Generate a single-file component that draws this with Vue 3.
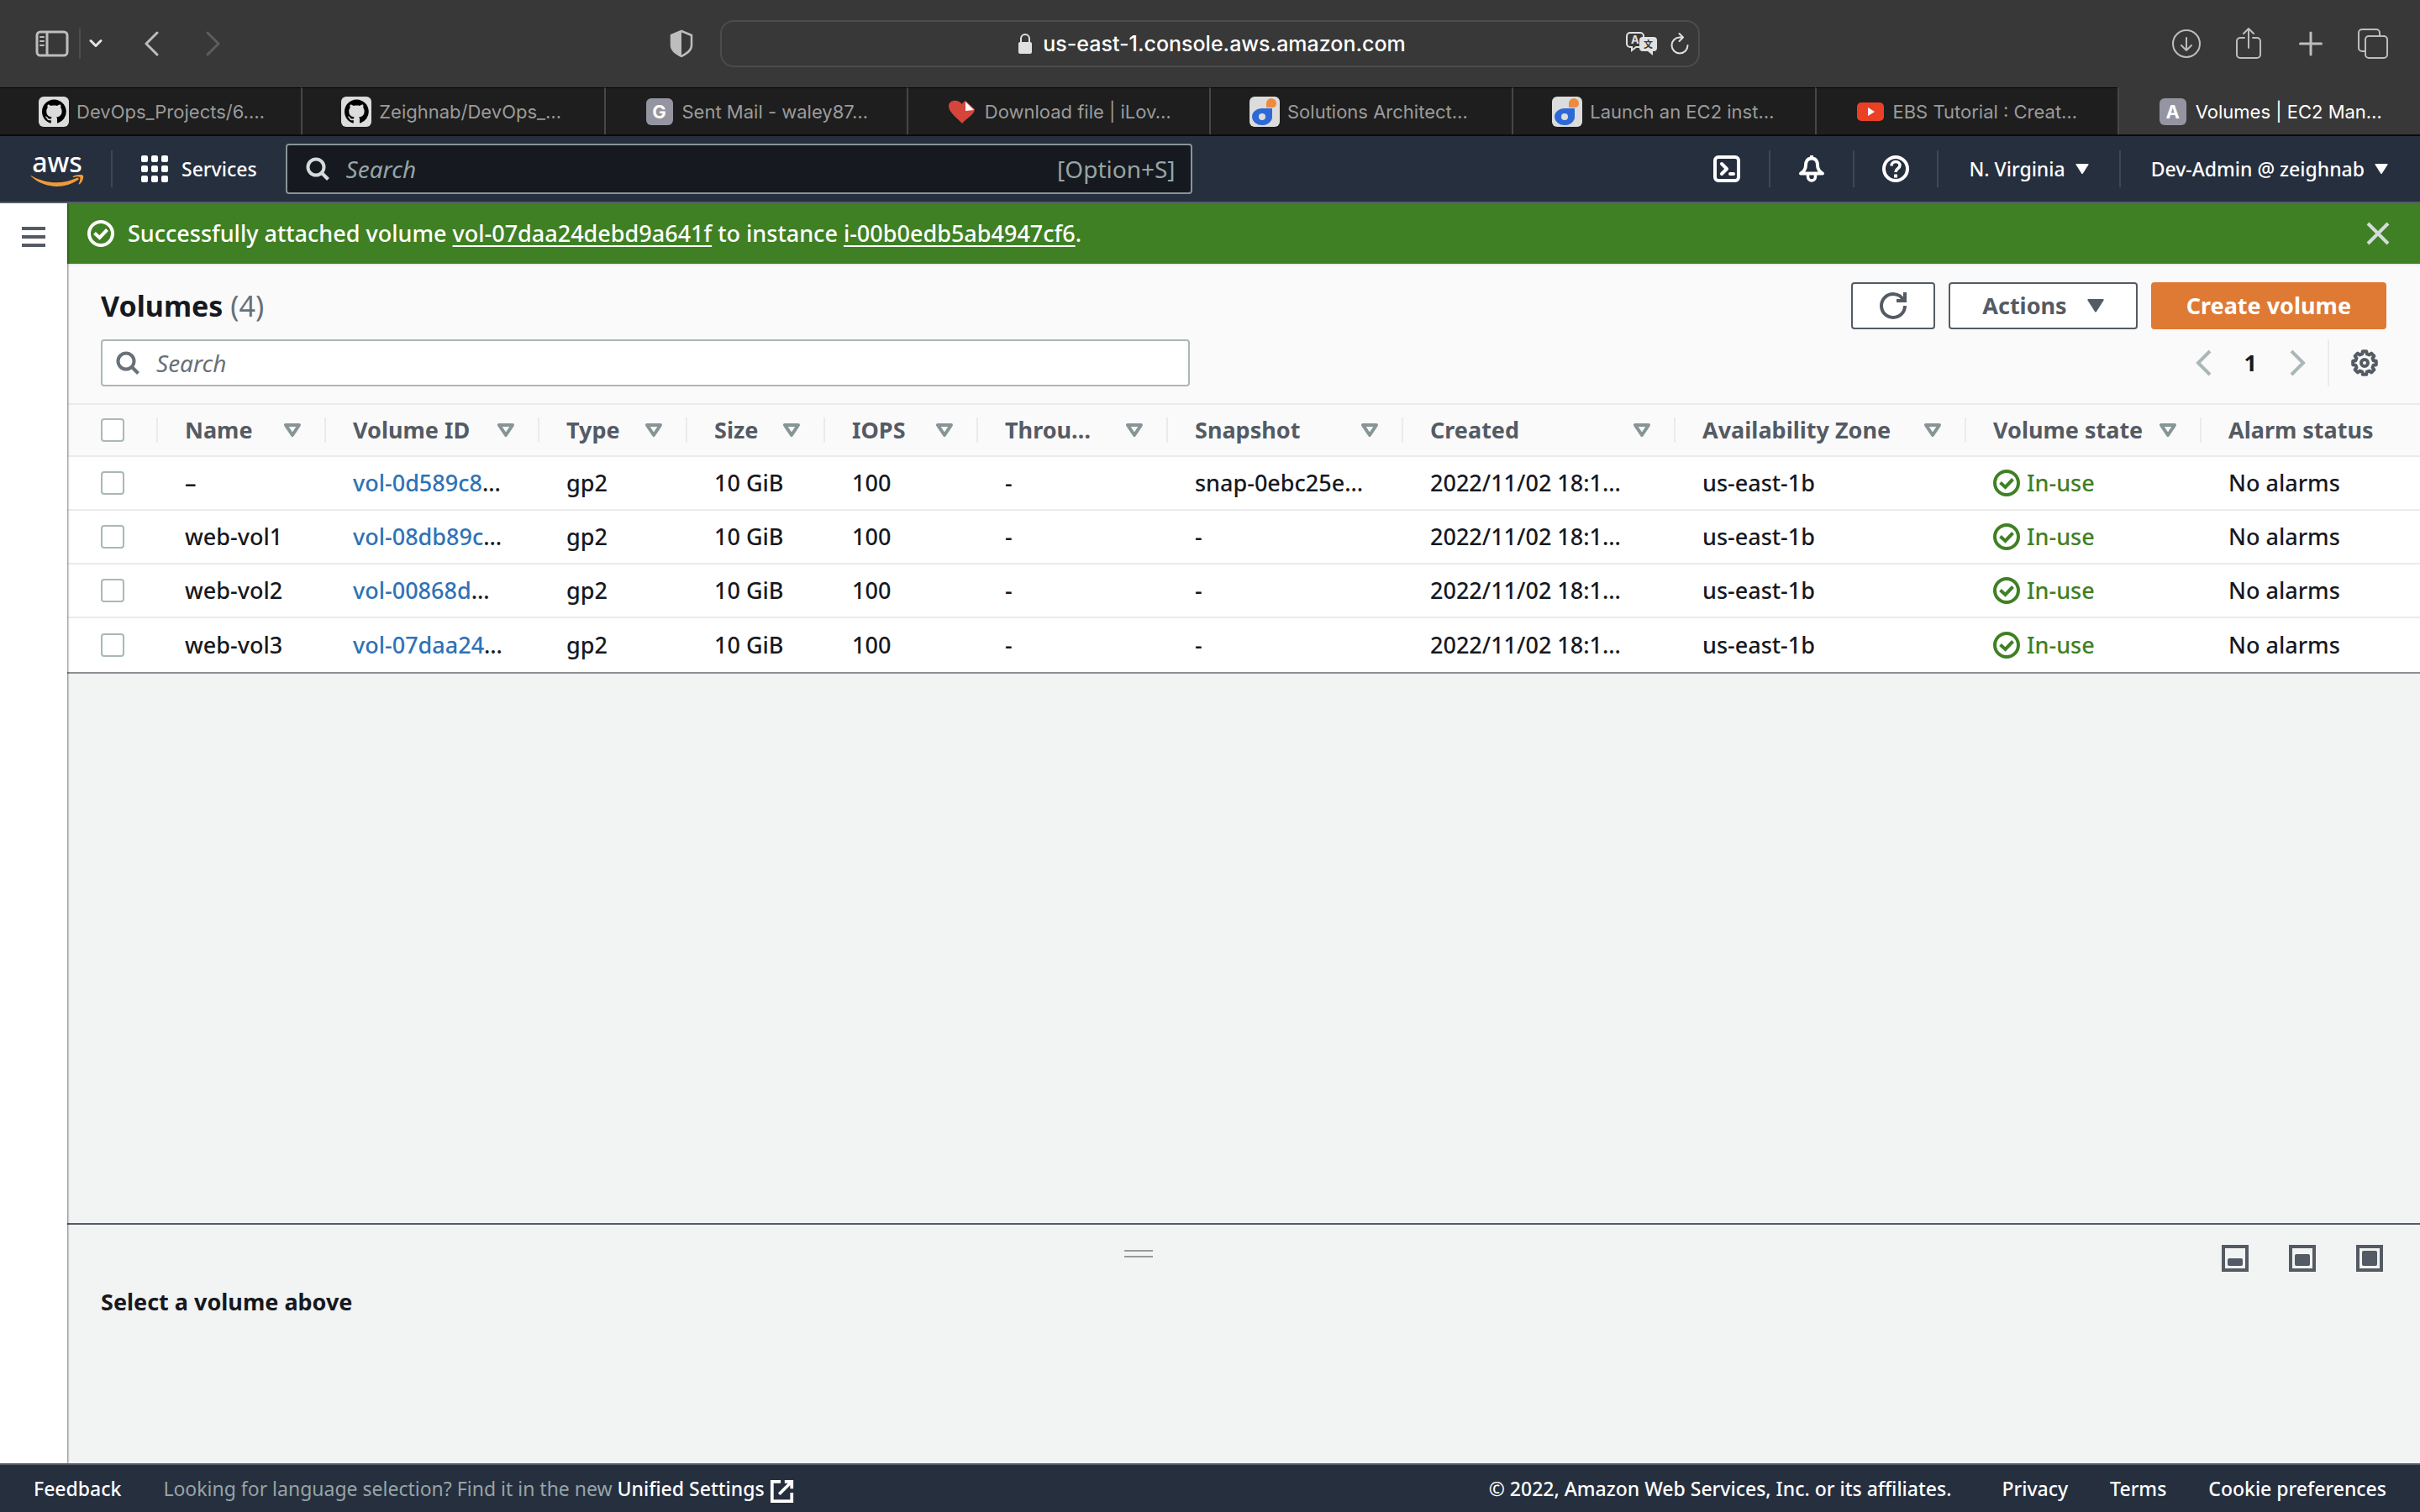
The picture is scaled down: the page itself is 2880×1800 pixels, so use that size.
<script setup>
import { ref } from 'vue'

const github = 'M8 0C3.58 0 0 3.58 0 8c0 3.54 2.29 6.53 5.47 7.59.4.07.55-.17.55-.38 0-.19-.01-.82-.01-1.49-2.01.37-2.53-.49-2.69-.94-.09-.23-.48-.94-.82-1.13-.28-.15-.68-.52-.01-.53.63-.01 1.08.58 1.23.82.72 1.21 1.87.87 2.33.66.07-.52.28-.87.51-1.07-1.78-.2-3.64-.89-3.64-3.95 0-.87.31-1.59.82-2.15-.08-.2-.36-1.02.08-2.12 0 0 .67-.21 2.2.82.64-.18 1.32-.27 2-.27.68 0 1.36.09 2 .27 1.53-1.04 2.2-.82 2.2-.82.44 1.1.16 1.92.08 2.12.51.56.82 1.27.82 2.15 0 3.07-1.87 3.75-3.65 3.95.29.25.54.73.54 1.48 0 1.07-.01 1.93-.01 2.2 0 .21.15.46.55.38A8.013 8.013 0 0016 8c0-4.42-3.58-8-8-8z'

const tabs = [
  { icon: 'github', title: 'DevOps_Projects/6.…' },
  { icon: 'github', title: 'Zeighnab/DevOps_…' },
  { icon: 'letter', letter: 'G', title: 'Sent Mail - waley87…' },
  { icon: 'heart', title: 'Download file | iLov…' },
  { icon: 'digital', title: 'Solutions Architect…' },
  { icon: 'digital', title: 'Launch an EC2 inst…' },
  { icon: 'youtube', title: 'EBS Tutorial : Creat…' },
  { icon: 'letter', letter: 'A', title: 'Volumes | EC2 Man…', active: true }
]

const columns = [
  { label: 'Name', cls: 'c-name' },
  { label: 'Volume ID', cls: 'c-id' },
  { label: 'Type', cls: 'c-type' },
  { label: 'Size', cls: 'c-size' },
  { label: 'IOPS', cls: 'c-iops' },
  { label: 'Throu…', cls: 'c-through' },
  { label: 'Snapshot', cls: 'c-snap' },
  { label: 'Created', cls: 'c-created' },
  { label: 'Availability Zone', cls: 'c-zone' },
  { label: 'Volume state', cls: 'c-state' },
  { label: 'Alarm status', cls: 'c-alarm', last: true }
]

const volumes = ref([
  { name: '–', id: 'vol-0d589c8', snapshot: 'snap-0ebc25e…', selected: false },
  { name: 'web-vol1', id: 'vol-08db89c', snapshot: '-', selected: false },
  { name: 'web-vol2', id: 'vol-00868d', snapshot: '-', selected: false },
  { name: 'web-vol3', id: 'vol-07daa24', snapshot: '-', selected: false }
])

// Cog outline: eight flat teeth around the centre of a 32-unit box
const cog = (() => {
  const pts = []
  for (let i = 0; i < 8; i++) {
    const base = (i * Math.PI) / 4
    for (const [off, r] of [[-0.26, 11], [-0.16, 14], [0.16, 14], [0.26, 11]]) {
      pts.push(`${(16 + r * Math.sin(base + off)).toFixed(1)},${(16 - r * Math.cos(base + off)).toFixed(1)}`)
    }
  }
  return pts.join(' ')
})()

const panelSizes = [
  { label: 'Small panel', y: 16, h: 9 },
  { label: 'Medium panel', y: 11, h: 14 },
  { label: 'Large panel', y: 7, h: 18 }
]
</script>

<template>
  <div class="page">
    <div class="toolbar">
      <div class="tool-side">
        <button class="tool" aria-label="Sidebar">
          <svg width="40" height="32" viewBox="0 0 40 32" fill="none" stroke="#bdbdbd" stroke-width="3">
            <rect x="2" y="2" width="36" height="28" rx="4" />
            <path d="M14 2v28" />
            <path d="M6 8h4M6 13h4M6 18h4" stroke-width="2" stroke-linecap="round" />
          </svg>
        </button>
        <span class="tool-rule"></span>
        <button class="tool drop" aria-label="Tab groups">
          <svg width="16" height="12" viewBox="0 0 16 12" fill="none" stroke="#e4e4e4" stroke-width="3" stroke-linecap="round" stroke-linejoin="round"><path d="M2 2.500l6 6 6-6" /></svg>
        </button>
        <button class="tool back" aria-label="Back">
          <svg width="18" height="30" viewBox="0 0 18 30" fill="none" stroke="#bdbdbd" stroke-width="3" stroke-linecap="round" stroke-linejoin="round"><path d="M15 2L2 15l13 13" /></svg>
        </button>
        <button class="tool forward" aria-label="Forward">
          <svg width="18" height="30" viewBox="0 0 18 30" fill="none" stroke="#5d5d5d" stroke-width="3" stroke-linecap="round" stroke-linejoin="round"><path d="M3 2l13 13L3 28" /></svg>
        </button>
        <button class="tool shield" aria-label="Privacy report">
          <svg width="28" height="34" viewBox="0 0 28 34"><path d="M14 2l12 5v12c0 6-5 9-12 13C7 28 2 25 2 19V7z" fill="none" stroke="#bdbdbd" stroke-width="2.500" stroke-linejoin="round" /><path d="M14 2v30C7 28 2 25 2 19V7z" fill="#bdbdbd" /></svg>
        </button>
      </div>
      <div class="address">
        <div class="address-text">
          <svg width="18" height="24" viewBox="0 0 18 24"><rect x="1" y="10" width="16" height="14" rx="2" fill="#e0e0e0" /><path d="M4 11V6a5 5 0 0110 0v5" fill="none" stroke="#e0e0e0" stroke-width="2" /></svg>
          <input class="url" type="text" aria-label="Address" value="us-east-1.console.aws.amazon.com" />
        </div>
        <button class="tool" aria-label="Translate">
          <svg width="38" height="28" viewBox="0 0 38 28">
            <path d="M16 18h-4l-5 4v-4H5a4 4 0 01-4-4V5a4 4 0 014-4h12a4 4 0 014 4v2" fill="none" stroke="#e0e0e0" stroke-width="2" />
            <text x="6" y="14" font-size="13" fill="#e0e0e0" class="mark">A</text>
            <path d="M20 6h13a4 4 0 014 4v9a4 4 0 01-4 4h-1v5l-6-5h-6a4 4 0 01-4-4v-9a4 4 0 014-4z" fill="#e0e0e0" />
            <text x="21" y="19" font-size="11" fill="#383838" class="mark">文</text>
          </svg>
        </button>
        <button class="tool reload" aria-label="Reload">
          <svg width="24" height="28" viewBox="0 0 24 28" fill="none" stroke="#e0e0e0" stroke-width="2" stroke-linecap="round" stroke-linejoin="round"><path d="M21.500 16A9.500 9.500 0 1112 6.500h4M11.500 2l4.500 4.500-4.500 4.500" /></svg>
        </button>
      </div>
      <div class="tool-right">
        <button class="tool" aria-label="Downloads">
          <svg width="36" height="38" viewBox="0 0 36 38" fill="none" stroke="#bdbdbd" stroke-width="2" stroke-linecap="round" stroke-linejoin="round"><circle cx="18" cy="19" r="16" /><path d="M18 12v15M12 21l6 6 6-6" /></svg>
        </button>
        <button class="tool" aria-label="Share">
          <svg width="32" height="38" viewBox="0 0 32 38" fill="none" stroke="#bdbdbd" stroke-width="2" stroke-linecap="round" stroke-linejoin="round"><path d="M11 12H6a4 4 0 00-4 4v16a4 4 0 004 4h20a4 4 0 004-4V16a4 4 0 00-4-4h-5M16 24V1M10 7l6-6 6 6" /></svg>
        </button>
        <button class="tool" aria-label="New tab">
          <svg width="28" height="38" viewBox="0 0 28 38" fill="none" stroke="#bdbdbd" stroke-width="3" stroke-linecap="round"><path d="M14 6v26M1.500 19h25" /></svg>
        </button>
        <button class="tool" aria-label="Tab overview">
          <svg width="36" height="38" viewBox="0 0 36 38" fill="none" stroke="#bdbdbd" stroke-width="2"><path d="M9 28H5a4 4 0 01-4-4V6a4 4 0 014-4h17a4 4 0 014 4v3" /><rect x="9" y="10" width="26" height="26" rx="4" /></svg>
        </button>
      </div>
    </div>

    <nav class="tabs">
      <a v-for="t in tabs" :key="t.title" href="#" class="tab" :class="{ active: t.active }">
        <span class="fav">
          <svg v-if="t.icon === 'github'" width="36" height="36" viewBox="0 0 36 36"><rect width="36" height="36" rx="6" fill="#dcdcdc" /><g transform="translate(4 3.500) scale(1.8)"><path :d="github" /></g></svg>
          <span v-else-if="t.icon === 'letter'" class="fav-letter">{{ t.letter }}</span>
          <svg v-else-if="t.icon === 'heart'" width="32" height="32" viewBox="0 0 32 32"><path d="M16 30C10 23 0 17 0 9c0-7 11-9 16-2 1-3 4-4 4-4l11 10c0 6-9 10-15 17z" fill="#d6453b" /><path d="M20 4l10 10-10 1z" fill="#fff" /></svg>
          <svg v-else-if="t.icon === 'digital'" width="36" height="36" viewBox="0 0 36 36"><rect width="36" height="36" rx="6" fill="#dcdcdc" /><path d="M20 13V8a6 6 0 0112 0c0 3-2 5-5 5z" fill="#ee8a3f" /><path d="M15 14h12v9a12 10 0 11-12-9z" fill="#2d69d6" /><circle cx="15" cy="24" r="4" fill="#dcdcdc" /></svg>
          <svg v-else width="32" height="32" viewBox="0 0 32 32"><rect y="5" width="32" height="22" rx="5" fill="#ea4025" /><path d="M13 11l8 5-8 5z" fill="#fff" /></svg>
        </span>
        <span class="tab-title">{{ t.title }}</span>
      </a>
    </nav>

    <header class="top">
      <a href="#" class="logo" aria-label="aws">
        <span>aws</span>
        <svg width="64" height="16" viewBox="0 0 64 16" fill="#ef9b38"><path d="M1 2c17 10 37 11 54 3 2-1 4 1 2 2-17 12-41 10-56-4-1-1 0-1 0-1z" /><path d="M51 3c2-2 10-3 12-1 1 2-1 8-4 10-1 1-2 0-1-1 1-2 2-6 1-7s-5-1-7 0c-1 0-2 0-1-1z" /></svg>
      </a>
      <span class="rule"></span>
      <button class="services">
        <svg width="32" height="32" viewBox="0 0 32 32" fill="#fff"><template v-for="r in 3" :key="r"><rect v-for="c in 3" :key="c" :x="(c - 1) * 12" :y="(r - 1) * 12" width="8" height="8" rx="2" /></template></svg>
        Services
      </button>
      <div class="global-search">
        <svg width="28" height="28" viewBox="0 0 28 28" fill="none" stroke="#d5dbdb" stroke-width="4"><circle cx="12" cy="12" r="9.500" /><path d="M18.500 18.500l8 8" /></svg>
        <input type="search" aria-label="Search services" placeholder="Search" />
        <kbd>[Option+S]</kbd>
      </div>
      <div class="top-right">
        <button class="top-item icon-item" aria-label="CloudShell">
          <svg width="32" height="32" viewBox="0 0 32 32" fill="none" stroke="#fff" stroke-width="4" stroke-linecap="round" stroke-linejoin="round"><rect x="2" y="2" width="28" height="28" rx="4" /><path d="M10 10l6 6-6 6M20 22h4" /></svg>
        </button>
        <button class="top-item icon-item" aria-label="Notifications">
          <svg width="32" height="32" viewBox="0 0 32 32" fill="none" stroke="#fff" stroke-width="4" stroke-linejoin="round"><path d="M16 3.500c-5 0-7 4-7 8 0 5-2 7-6 10h26c-4-3-6-5-6-10 0-4-2-8-7-8zM16 0v4" /><path d="M11.500 22v3a4.500 5 0 009 0v-3" stroke-width="3.500" /></svg>
        </button>
        <button class="top-item icon-item" aria-label="Help">
          <svg width="32" height="32" viewBox="0 0 32 32" fill="none" stroke="#fff"><circle cx="16" cy="16" r="14" stroke-width="4" /><path d="M11 12.500c0-3 2-5 5-5s5 2 5 4.500c0 3.500-5 4-5 8" stroke-width="3.500" /><path d="M16 22.500v4" stroke-width="4" /></svg>
        </button>
        <button class="top-item">N. Virginia
          <svg width="16" height="12" viewBox="0 0 16 12" fill="#fff"><path d="M1 0h14q1 0 .5 1L8.500 12h-1L.5 1Q0 0 1 0z" /></svg>
        </button>
        <button class="top-item">Dev-Admin @ zeighnab
          <svg width="16" height="12" viewBox="0 0 16 12" fill="#fff"><path d="M1 0h14q1 0 .5 1L8.500 12h-1L.5 1Q0 0 1 0z" /></svg>
        </button>
      </div>
    </header>

    <div class="body">
      <aside class="rail">
        <button aria-label="Open navigation">
          <svg width="28" height="24" viewBox="0 0 28 24" fill="#545b64"><path d="M0 0h28v4H0zM0 10h28v4H0zM0 20h28v4H0z" /></svg>
        </button>
      </aside>
      <main class="main">
        <div class="flash" role="status">
          <svg width="32" height="32" viewBox="0 0 32 32" fill="none" stroke="#fff" stroke-width="4"><circle cx="16" cy="16" r="14" /><path d="M8.500 15.500l6 5.500 9-9.500" /></svg>
          <p>Successfully attached volume <a href="#">vol-07daa24debd9a641f</a> to instance <a href="#">i-00b0edb5ab4947cf6</a>.</p>
          <button aria-label="Dismiss">
            <svg width="28" height="28" viewBox="0 0 28 28" stroke="#d5dbdb" stroke-width="4"><path d="M2 2l24 24M26 2L2 26" /></svg>
          </button>
        </div>

        <section class="volumes">
          <div class="head">
            <h1>Volumes <span>(4)</span></h1>
            <button class="btn refresh" aria-label="Refresh">
              <svg width="32" height="32" viewBox="0 0 16 16" fill="none" stroke="#545b64" stroke-width="2"><path d="M15 8c0 3.900-3.100 7-7 7s-7-3.100-7-7 3.100-7 7-7c2.800 0 5.300 1.700 6.400 4.100" /><path d="M10 5h5V0" /></svg>
            </button>
            <button class="btn">Actions
              <svg width="20" height="16" viewBox="0 0 20 16" fill="#545b64"><path d="M1 0h18q1 0 .5 1.500L11 15q-1 1-2 0L.5 1.500Q0 0 1 0z" /></svg>
            </button>
            <button class="btn primary">Create volume</button>
          </div>
          <div class="filter">
            <label class="filter-box">
              <svg width="28" height="28" viewBox="0 0 28 28" fill="none" stroke="#687078" stroke-width="4"><circle cx="12" cy="12" r="9.500" /><path d="M18.500 18.500l8 8" /></svg>
              <input type="search" aria-label="Search volumes" placeholder="Search" />
            </label>
            <div class="pager">
              <button aria-label="Previous page"><svg width="20" height="32" viewBox="0 0 20 32" fill="none" stroke="#aab7b8" stroke-width="4"><path d="M17 2L3 16l14 14" /></svg></button>
              <button class="current">1</button>
              <button aria-label="Next page"><svg width="20" height="32" viewBox="0 0 20 32" fill="none" stroke="#aab7b8" stroke-width="4"><path d="M3 2l14 14L3 30" /></svg></button>
            </div>
            <button class="gear" aria-label="Preferences">
              <svg width="32" height="32" viewBox="0 0 32 32" fill="none" stroke="#545b64" stroke-width="4" stroke-linejoin="round"><polygon :points="cog" /><circle cx="16" cy="16" r="4" /></svg>
            </button>
          </div>

          <table>
            <colgroup>
              <col class="c-check" />
              <col v-for="c in columns" :key="c.label" :class="c.cls" />
            </colgroup>
            <thead>
              <tr>
                <th class="check"><div class="th check-cell"><input type="checkbox" aria-label="Select all volumes" /></div></th>
                <th v-for="c in columns" :key="c.label" scope="col">
                  <div class="th">
                    <span>{{ c.label }}</span>
                    <button v-if="!c.last" :aria-label="'Sort by ' + c.label">
                      <svg width="20" height="16" viewBox="0 0 20 16" fill="none" stroke="#879596" stroke-width="4" stroke-linejoin="round"><path d="M2 2h16l-8 12z" /></svg>
                    </button>
                  </div>
                </th>
              </tr>
            </thead>
            <tbody>
              <tr v-for="v in volumes" :key="v.id">
                <td class="check"><div class="check-cell"><input v-model="v.selected" type="checkbox" :aria-label="'Select ' + v.id" /></div></td>
                <td>{{ v.name }}</td>
                <td><a href="#">{{ v.id }}</a>…</td>
                <td>gp2</td>
                <td>10 GiB</td>
                <td>100</td>
                <td>-</td>
                <td>{{ v.snapshot }}</td>
                <td>2022/11/02 18:1…</td>
                <td>us-east-1b</td>
                <td>
                  <span class="state">
                    <svg width="32" height="32" viewBox="0 0 32 32" fill="none" stroke="#3f8024" stroke-width="4"><circle cx="16" cy="16" r="14" /><path d="M8.500 15.500l6 5.500 9-9.500" /></svg>
                    In-use
                  </span>
                </td>
                <td>No alarms</td>
              </tr>
            </tbody>
          </table>
        </section>

        <section class="split">
          <div class="split-bar">
            <span></span>
            <button class="handle" aria-label="Resize panel"></button>
            <div class="sizes">
              <button v-for="p in panelSizes" :key="p.label" :aria-label="p.label">
                <svg width="32" height="32" viewBox="0 0 32 32"><rect x="2" y="2" width="28" height="28" fill="none" stroke="#545b64" stroke-width="4" /><rect x="7" :y="p.y" width="18" :height="p.h" rx="2" fill="#545b64" /></svg>
              </button>
            </div>
          </div>
          <h2>Select a volume above</h2>
        </section>
      </main>
    </div>

    <footer class="foot">
      <a href="#">Feedback</a>
      <p>Looking for language selection? Find it in the new <a href="#">Unified Settings
        <svg width="30" height="30" viewBox="0 0 16 16" fill="none" stroke="#fff" stroke-width="2"><path d="M9.500 2H14v4.500M6 10l8-8M14 9v5.500H1.500V2H7" /></svg></a></p>
      <span class="copy">© 2022, Amazon Web Services, Inc. or its affiliates.</span>
      <a href="#">Privacy</a>
      <a href="#">Terms</a>
      <a href="#">Cookie preferences</a>
    </footer>
  </div>
</template>

<style>
body {
  background: #f2f3f3;
}
</style>

<style scoped>
.page {
  min-height: 100vh;
  display: flex;
  flex-direction: column;
  font-family: "Noto Sans", "Open Sans", sans-serif;
  font-size: 27px;
  font-weight: 500;
  line-height: 40px;
  color: #16191f;
}
.page * {
  box-sizing: border-box;
}
button {
  font: inherit;
  color: inherit;
  background: none;
  border: 0;
  padding: 0;
  margin: 0;
  display: flex;
  align-items: center;
}
input {
  font: inherit;
  margin: 0;
}
a {
  color: inherit;
  text-decoration: none;
}
p, h1, h2 {
  margin: 0;
}
svg {
  display: block;
  flex: none;
}

/* Browser toolbar */
.toolbar {
  height: 104px;
  background: #383838;
  display: grid;
  grid-template-columns: 857px 1fr 857px;
  align-items: center;
  font-family: Inter, sans-serif;
}
.tool-side {
  display: flex;
  align-items: center;
  padding: 0 32px 0 42px;
}
.tool-rule {
  width: 2px;
  height: 36px;
  margin: 0 10px 0 12px;
  background: #4d4d4d;
}
.back {
  margin-left: 50px;
}
.forward {
  margin-left: 54px;
}
.shield {
  margin-left: auto;
}
.address {
  height: 56px;
  border: 2px solid #4c4c4c;
  border-radius: 16px;
  display: flex;
  align-items: center;
  padding-right: 10px;
  gap: 14px;
}
.address-text {
  flex: 1;
  display: flex;
  align-items: center;
  justify-content: center;
  gap: 12px;
  padding-left: 104px;
}
.url {
  field-sizing: content;
  padding: 0;
  border: 0;
  background: none;
  color: #fff;
  font-size: 25px;
  font-weight: 500;
}
.mark {
  font-family: Inter, "Noto Sans CJK SC", sans-serif;
  font-weight: 700;
}
.tool-right {
  display: flex;
  align-items: center;
  justify-content: flex-end;
  gap: 42px;
  padding-right: 40px;
}
.tool-right .tool {
  width: 32px;
  justify-content: center;
}

/* Browser tabs */
.tabs {
  height: 58px;
  display: flex;
  background: #1e1e1e;
  border-bottom: 2px solid #0b0b0b;
  font-family: Inter, sans-serif;
  font-size: 22px;
  font-weight: 400;
  color: #9b9b9b;
}
.tab {
  flex: 1;
  min-width: 0;
  display: flex;
  align-items: center;
  gap: 9px;
  padding-left: 46px;
  border-top: 1px solid #050505;
  border-left: 2px solid #474747;
}
.tab:first-child {
  border-left: 0;
}
.tab.active {
  background: #383838;
  border-top-color: #383838;
  color: #fff;
}
.tab-title {
  white-space: nowrap;
}
.fav {
  width: 36px;
  display: flex;
  justify-content: center;
}
.fav-letter {
  width: 32px;
  height: 32px;
  line-height: 32px;
  border-radius: 6px;
  background: #9594a1;
  color: #fff;
  font-weight: 700;
  font-size: 22px;
  text-align: center;
}

/* Console header */
.top {
  height: 80px;
  display: flex;
  align-items: center;
  background: #262f3e;
  border-bottom: 2px solid #545b64;
  color: #fff;
  font-size: 23px;
}
.logo {
  width: 64px;
  margin-left: 36px;
  font-size: 32px;
  line-height: 28px;
  display: flex;
  flex-direction: column;
  align-items: center;
}
.rule {
  width: 2px;
  height: 44px;
  margin: 0 34px 0 32px;
  background: #414750;
}
.services {
  gap: 16px;
}
.global-search {
  flex: 0 1 1079px;
  height: 60px;
  margin-left: 34px;
  padding: 0 18px 0 22px;
  display: flex;
  align-items: center;
  gap: 20px;
  background: #16191f;
  border: 2px solid #879596;
  border-radius: 4px;
  color: #95a5a6;
  font-size: 28px;
  font-weight: 400;
}
.global-search input,
.filter-box input {
  flex: 1;
  min-width: 0;
  height: 40px;
  padding: 0;
  border: 0;
  background: none;
  color: inherit;
}
.global-search input::placeholder,
.filter-box input::placeholder {
  color: inherit;
  font-style: italic;
  opacity: 1;
}
kbd {
  font: inherit;
}
.top-right {
  margin-left: auto;
  display: flex;
  padding-right: 2px;
}
.top-item {
  height: 44px;
  padding: 0 36px;
  gap: 12px;
  border-left: 2px solid #414750;
  white-space: nowrap;
}
.icon-item {
  width: 100px;
  justify-content: center;
  padding: 0;
}
.top-item:first-child {
  border-left: 0;
}

/* Page frame */
.body {
  flex: 1;
  display: flex;
}
.rail {
  position: relative;
  z-index: 1;
  width: 80px;
  background: #fff;
  padding: 28px 26px;
  box-shadow: 1px 0 2px rgba(0, 0, 0, 0.5);
  clip-path: inset(0 -6px 0 0);
}
.main {
  flex: 1;
  min-width: 0;
  display: flex;
  flex-direction: column;
  background: #f2f3f3;
}
.flash {
  height: 72px;
  display: flex;
  align-items: center;
  gap: 16px;
  padding: 0 36px 0 24px;
  background: #3f8024;
  color: #fff;
}
.flash p {
  flex: 1;
}
.flash a {
  text-decoration: underline;
  text-decoration-thickness: 2px;
  text-underline-offset: 4px;
}

/* Volumes table */
.volumes {
  background: #fafafa;
  border-top: 2px solid #ebebeb;
  border-bottom: 2px solid #8a9094;
}
.head {
  display: flex;
  align-items: center;
  gap: 16px;
  padding: 20px 40px 12px;
}
h1 {
  flex: 1;
  font-size: 34px;
  line-height: 44px;
  font-weight: 700;
}
h1 span {
  font-weight: 400;
  color: #687078;
}
.btn {
  height: 56px;
  padding: 0 38px;
  gap: 24px;
  border: 2px solid #545b64;
  border-radius: 4px;
  background: #fff;
  color: #545b64;
  font-weight: 700;
}
.refresh {
  width: 100px;
  padding: 0;
  justify-content: center;
}
.primary {
  padding: 0 40px;
  background: #de7a34;
  border-color: #de7a34;
  color: #fff;
}
.filter {
  display: flex;
  align-items: center;
  padding: 0 40px 20px;
}
.filter-box {
  flex: 0 1 1296px;
  height: 56px;
  padding: 0 16px;
  display: flex;
  align-items: center;
  gap: 20px;
  background: #fff;
  border: 2px solid #aab7b8;
  border-radius: 4px;
  color: #687078;
  font-size: 28px;
  font-weight: 400;
}
.pager {
  margin-left: auto;
  display: flex;
  align-items: center;
  gap: 38px;
  padding-right: 26px;
}
.current {
  font-weight: 700;
}
.gear {
  height: 56px;
  padding: 0 10px 0 26px;
  border-left: 2px solid #eaeded;
}
table {
  width: 100%;
  table-layout: fixed;
  border-collapse: separate;
  border-spacing: 0;
  white-space: nowrap;
}
.c-check { width: 106px; }
.c-name { width: 200px; }
.c-id { width: 254px; }
.c-type { width: 176px; }
.c-size { width: 164px; }
.c-iops { width: 182px; }
.c-through { width: 226px; }
.c-snap { width: 280px; }
.c-created { width: 324px; }
.c-zone { width: 346px; }
.c-state { width: 280px; }
th {
  height: 64px;
  padding: 0;
  border-top: 2px solid #ebebeb;
  border-bottom: 2px solid #ebebeb;
  color: #545b64;
  text-align: left;
  font-weight: 700;
}
.th {
  height: 30px;
  display: flex;
  align-items: center;
  justify-content: space-between;
  padding: 0 28px 0 32px;
  border-left: 2px solid #ebebeb;
}
th.check .th {
  border-left: 0;
}
td {
  height: 64px;
  padding: 0 0 0 34px;
  background: #fff;
  border-bottom: 2px solid #ebebeb;
}
tbody tr:last-child td {
  border-bottom: 0;
}
td a {
  color: #2f72b7;
}
td.check {
  padding: 0;
}
.check-cell {
  display: flex;
  padding: 0 0 0 40px;
}
.check-cell input {
  appearance: none;
  width: 28px;
  height: 28px;
  border: 2px solid #aab7b8;
  border-radius: 4px;
  background: #fff;
}
.state {
  display: flex;
  align-items: center;
  gap: 8px;
  color: #3f8024;
}

/* Split panel */
.split {
  margin-top: auto;
  min-height: 286px;
  padding: 24px 40px 0;
  border-top: 2px solid #545b64;
}
.split-bar {
  display: grid;
  grid-template-columns: 1218fr 34px 1468fr;
  align-items: start;
  margin-bottom: 16px;
}
.handle {
  height: 9px;
  margin-top: 6px;
  border: solid #999;
  border-width: 2px 0;
}
.sizes {
  display: flex;
  justify-content: flex-end;
  gap: 48px;
  padding-right: 4px;
}
h2 {
  font-size: 27px;
  line-height: 40px;
  font-weight: 700;
}

/* Footer */
.foot {
  height: 58px;
  display: flex;
  align-items: center;
  gap: 50px;
  padding: 0 40px;
  background: #262f3e;
  border-top: 2px solid #545b64;
  color: #fff;
  font-size: 23px;
  white-space: nowrap;
}
.foot p {
  font-weight: 400;
  color: #95a5a6;
}
.foot p a {
  color: #fff;
  font-weight: 500;
}
.foot p svg {
  display: inline-block;
  vertical-align: middle;
}
.copy {
  margin-left: auto;
  padding-right: 10px;
}
</style>
